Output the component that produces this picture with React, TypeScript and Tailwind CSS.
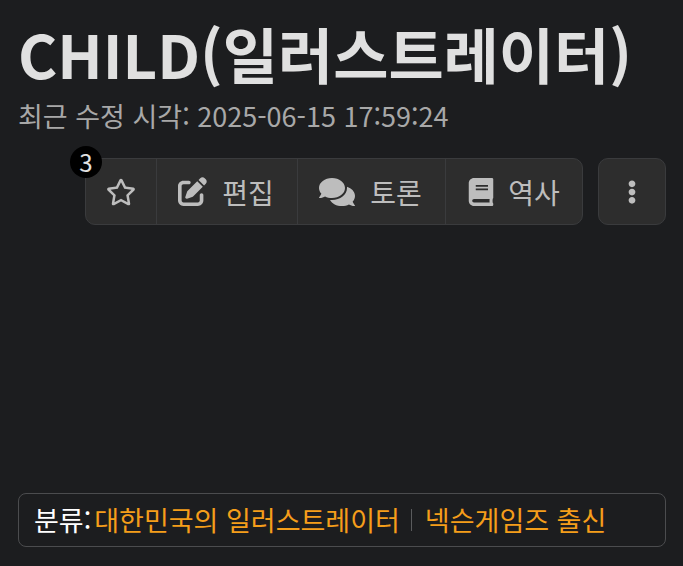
import { FaRegStar, FaComments, FaBook, FaEllipsisV } from "react-icons/fa";
import { FaPenToSquare } from "react-icons/fa6";

const font = "font-['Noto_Sans_CJK_KR','Noto_Sans',sans-serif]";

export default function App() {
  return (
    <div lang="ko" className={`w-[683px] h-[566px] bg-[#1c1d1f] flex flex-col overflow-hidden pl-[18px] pr-[17px] ${font}`}>
      <h1 className="mt-[10px] h-[86px] text-[60px] leading-[86px] font-bold text-[#e0e0e0] whitespace-nowrap">CHILD(일러스트레이터)</h1>
      <p className="h-[40px] text-[27px] leading-[40px] text-[#a8a8a8] whitespace-nowrap">최근 수정 시각: 2025-06-15 17:59:24</p>
      <div className="mt-[22px] flex justify-end gap-[15px]">
        <div className="relative flex h-[67px] rounded-[10px] border border-[#3a3b3d] bg-[#2d2d2d] text-[#bdbdbd] text-[28px]">
          <span className="absolute -left-[16px] -top-[13px] w-[32px] h-[32px] rounded-full bg-black text-[#e0e0e0] text-[24px] flex items-center justify-center">3</span>
          <div className="w-[71px] flex items-center justify-center border-r border-[#3a3b3d]"><FaRegStar size={30} /></div>
          <div className="w-[141px] flex items-center justify-center gap-[15px] pr-[2px] border-r border-[#3a3b3d]"><FaPenToSquare size={29} /><span>편집</span></div>
          <div className="w-[148px] flex items-center justify-center gap-[15px] pr-[2px] border-r border-[#3a3b3d]"><FaComments size={36} /><span>토론</span></div>
          <div className="w-[136px] flex items-center justify-center gap-[13px] pr-[1px]"><FaBook size={28} /><span>역사</span></div>
        </div>
        <div className="w-[68px] h-[67px] rounded-[10px] border border-[#3a3b3d] bg-[#2d2d2d] flex items-center justify-center text-[#bdbdbd]"><FaEllipsisV size={24} /></div>
      </div>
      <div className="mt-auto mb-[19px] h-[54px] rounded-[8px] border border-[#4b4c4e] flex items-center px-[15px] text-[27px] whitespace-nowrap">
        <span className="text-white">분류:</span>
        <span className="ml-[3px] text-[#f59e1a]">대한민국의 일러스트레이터</span>
        <span className="ml-[11px] mr-[13px] w-px h-[22px] bg-[#5a5b5d]"></span>
        <span className="text-[#f59e1a]">넥슨게임즈 출신</span>
      </div>
    </div>
  );
}
